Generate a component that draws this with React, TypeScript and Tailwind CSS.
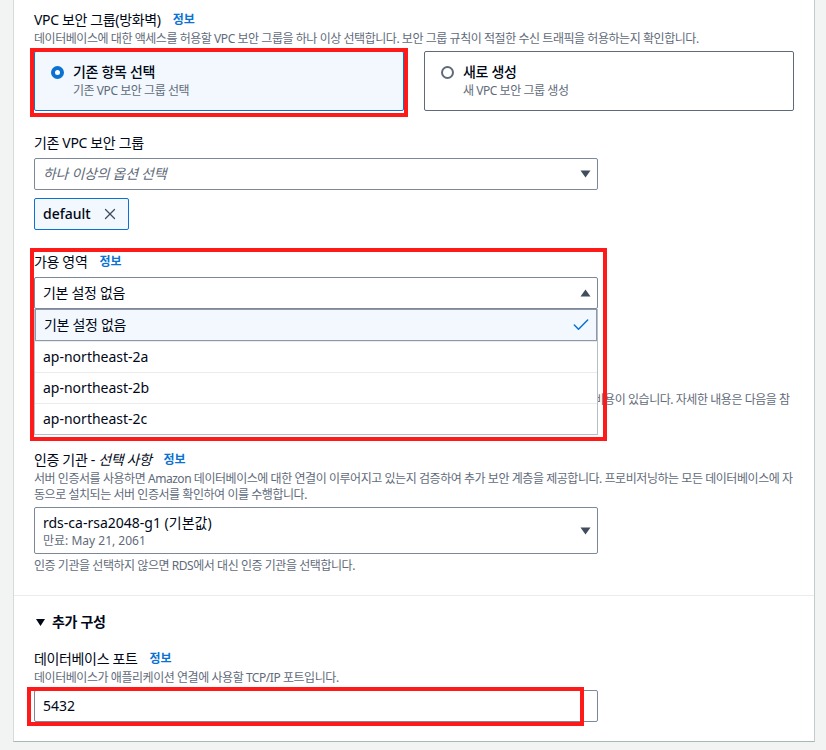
import { Check, X } from 'lucide-react'

const FONT = "font-['Noto_Sans','Noto_Sans_CJK_KR',sans-serif] [font-feature-settings:'palt']"
const DESC = 'text-xs leading-4 text-[#5f6b7a] tracking-[-0.45px]'
const LABEL = 'text-sm leading-[22px] tracking-[-0.35px]'

function Info() {
  return <span className="ml-3 text-xs font-bold tracking-normal text-[#0972d3]">정보</span>
}

function Caret({ up = false }: { up?: boolean }) {
  return (
    <svg width="11" height="8" viewBox="0 0 11 8" className="shrink-0">
      {up ? <path d="M5.5 0.5L10.5 7.5H0.5Z" fill="#414d5c" /> : <path d="M0.5 0.5H10.5L5.5 7.5Z" fill="#414d5c" />}
    </svg>
  )
}

function Radio({ checked }: { checked: boolean }) {
  return checked ? (
    <span className="mt-[5px] block h-[13px] w-[13px] shrink-0 rounded-full border-[4px] border-[#0972d3] bg-white" />
  ) : (
    <span className="mt-[5px] block h-[13px] w-[13px] shrink-0 rounded-full border-2 border-[#5f6b7a] bg-white" />
  )
}

function Tile({ checked, title, sub }: { checked: boolean; title: string; sub: string }) {
  return (
    <div
      className={
        checked
          ? 'flex h-[60px] gap-[9px] rounded-[2px] border border-[#0972d3] bg-[#f2f8fd] pl-[16px] pt-[9px]'
          : 'flex h-[60px] gap-[9px] rounded-[2px] border border-[#5f6b7a] bg-white pl-[16px] pt-[9px]'
      }
    >
      <Radio checked={checked} />
      <div>
        <div className="text-sm font-medium leading-[22px] tracking-[-0.3px]">{title}</div>
        <div className={DESC}>{sub}</div>
      </div>
    </div>
  )
}

const options = ['기본 설정 없음', 'ap-northeast-2a', 'ap-northeast-2b', 'ap-northeast-2c']

export default function App() {
  return (
    <div className={`h-[750px] w-[826px] overflow-hidden bg-[#f2f3f3] pl-[13px] pr-[11px] text-[#000716] ${FONT}`}>
      <div className="h-[742px] border-b border-l border-r border-b-[#aab7b8] border-l-[#d5dbdb] border-r-[#c6cccc] bg-white">
        {/* 연결 설정 */}
        <div className="px-5 pb-[21px] pt-[9px]">
          <div className={`flex items-center ${LABEL}`}>
            VPC 보안 그룹(방화벽)
            <Info />
          </div>
          <p className={DESC}>
            데이터베이스에 대한 액세스를 허용할 VPC 보안 그룹을 하나 이상 선택합니다. 보안 그룹 규칙이 적절한 수신 트래픽을 허용하는지 확인합니다.
          </p>
          <div className="mt-1 grid grid-cols-2 gap-5">
            <div className="relative">
              <Tile checked title="기존 항목 선택" sub="기존 VPC 보안 그룹 선택" />
              <div className="pointer-events-none absolute -bottom-[6px] -left-1 -right-1 -top-[3px] border-4 border-[#ff1a1a]" />
            </div>
            <Tile checked={false} title="새로 생성" sub="새 VPC 보안 그룹 생성" />
          </div>

          <div className={`mt-[21px] ${LABEL}`}>기존 VPC 보안 그룹</div>
          <div className="mt-1 flex h-[32px] w-[564px] items-center justify-between rounded-[2px] border border-[#7d8998] pl-[8px] pr-[6px]">
            <span className="text-sm italic tracking-[-0.3px] text-[#5f6b7a]">하나 이상의 옵션 선택</span>
            <Caret />
          </div>
          <div className="mt-2 inline-flex h-[32px] items-center gap-[10px] rounded-[2px] border border-[#0972d3] bg-[#f2f8fd] pl-[8px] pr-[9px]">
            <span className="text-sm font-medium">default</span>
            <X className="h-[18px] w-[18px] text-[#414d5c]" strokeWidth={1.7} />
          </div>

          {/* 가용 영역 */}
          <div className="relative mt-[21px]">
            <div className={`flex items-center ${LABEL}`}>
              가용 영역
              <Info />
            </div>
            <div className="relative mt-1 w-[564px]">
              <div className="flex h-[32px] items-center justify-between rounded-[2px] border border-[#7d8998] pl-[8px] pr-[6px]">
                <span className="text-sm tracking-[-0.3px]">기본 설정 없음</span>
                <Caret up />
              </div>
              <ul className="absolute left-0 top-full z-10 w-full border-x border-b border-[#b6bec9] bg-white">
                {options.map((o, i) => (
                  <li
                    key={o}
                    className={
                      i === 0
                        ? 'flex h-[32px] items-center justify-between border border-[#8d99a8] bg-[#f2f8fd] pl-[8px] pr-[5px] text-sm tracking-[-0.3px]'
                        : 'flex h-[31px] items-center border-t border-[#e9ebed] pl-[8px] text-sm'
                    }
                  >
                    {o}
                    {i === 0 && <Check className="h-[20px] w-[20px] text-[#0972d3]" strokeWidth={1.8} />}
                  </li>
                ))}
              </ul>
            </div>

            {/* 드롭다운 아래 가려진 필드 */}
            <div className={`mt-[22px] ${LABEL}`}>RDS 프록시</div>
            <div className="mt-1 text-sm leading-5">RDS 프록시 생성</div>
            <p className={`mt-[15px] ${DESC}`}>
              RDS 프록시는 애플리케이션의 확장성, 가용성, 보안을 개선하는 완전관리형 데이터베이스 프록시입니다. 프록시는 추가 비용이 있습니다. 자세한 내용은 다음을 참조하세요.
            </p>

            <div className="pointer-events-none absolute -left-1 -top-[3px] z-20 h-[193px] w-[577px] border-4 border-[#ff1a1a]" />
          </div>

          {/* 인증 기관 */}
          <div className={`mt-[25px] flex items-center ${LABEL}`}>
            인증 기관 -&nbsp;<span className="italic">선택 사항</span>
            <Info />
          </div>
          <p className={DESC}>
            서버 인증서를 사용하면 Amazon 데이터베이스에 대한 연결이 이루어지고 있는지 검증하여 추가 보안 계층을 제공합니다. 프로비저닝하는 모든 데이터베이스에 자동으로 설치되는 서버 인증서를 확인하여 이를 수행합니다.
          </p>
          <div className="mt-1 flex h-[47px] w-[564px] items-center justify-between rounded-[2px] border border-[#7d8998] pl-[8px] pr-[6px]">
            <div>
              <div className="text-sm leading-5">rds-ca-rsa2048-g1 (기본값)</div>
              <div className="text-xs leading-4 text-[#5f6b7a]">만료: May 21, 2061</div>
            </div>
            <Caret />
          </div>
          <p className={`mt-1 ${DESC}`}>인증 기관을 선택하지 않으면 RDS에서 대신 인증 기관을 선택합니다.</p>
        </div>

        {/* 추가 구성 */}
        <div className="border-t border-[#e9ebed] px-5 pt-[15px]">
          <div className="flex items-center gap-[7px] pl-[2px] text-sm font-bold leading-[22px] tracking-[-0.3px]">
            <svg width="9" height="7" viewBox="0 0 9 7">
              <path d="M0 0H9L4.5 7Z" fill="#000716" />
            </svg>
            추가 구성
          </div>
          <div className={`mt-[15px] flex items-center ${LABEL}`}>
            데이터베이스 포트
            <Info />
          </div>
          <p className={DESC}>데이터베이스가 애플리케이션 연결에 사용할 TCP/IP 포트입니다.</p>
          <div className="relative mt-1 w-[564px]">
            <div className="flex h-[32px] items-center rounded-[2px] border border-[#7d8998] pl-[8px] text-sm">5432</div>
            <div className="pointer-events-none absolute -left-[7px] -top-[3px] h-[39px] w-[557px] border-4 border-[#ff1a1a]" />
          </div>
        </div>
      </div>
    </div>
  )
}
